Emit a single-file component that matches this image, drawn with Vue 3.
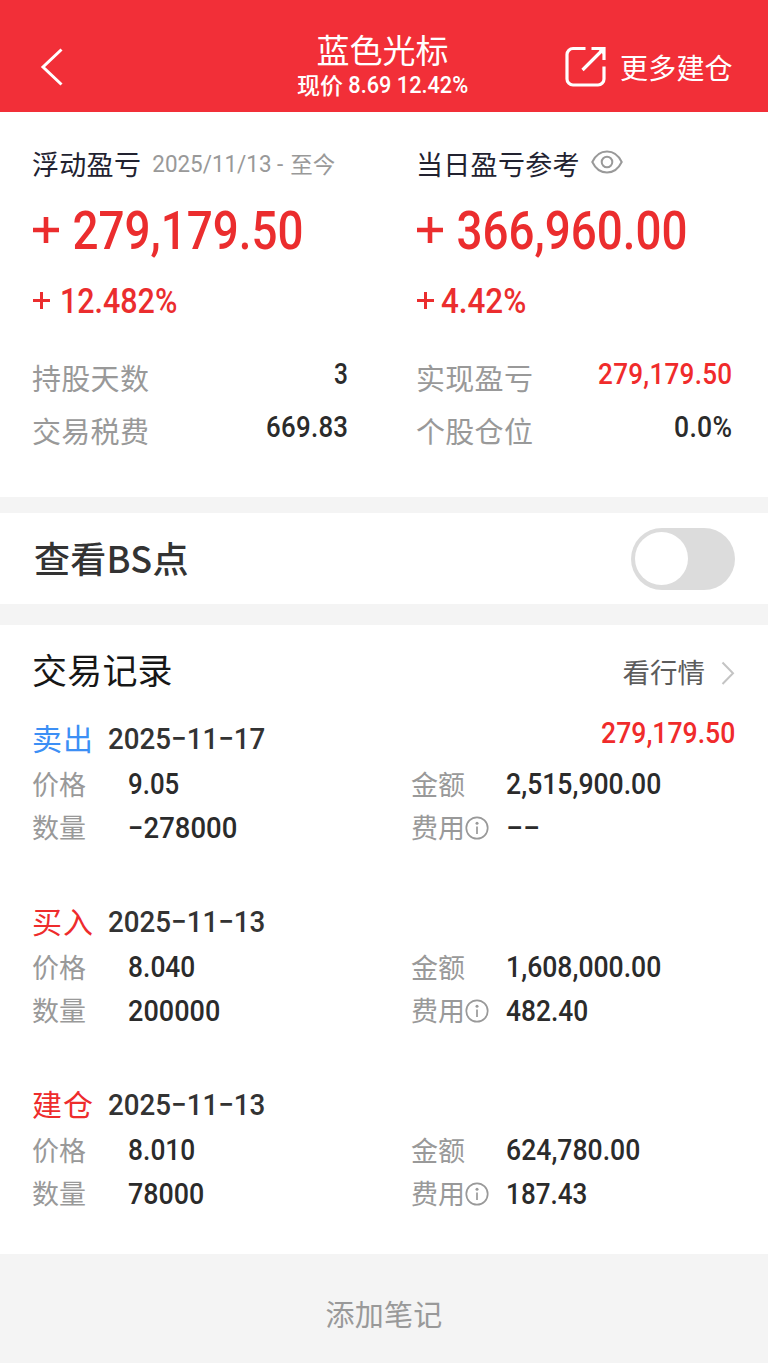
<script setup>
import { h } from 'vue'

// Condensed numeral: the box is w wide and cap tall, the baseline is its bottom edge.
const Num = ({ text, w, cap, weight = 500 }) => {
  const size = cap / 0.711
  const side = size * 0.03
  return h('svg', { width: w, height: cap, overflow: 'visible', style: 'display:block;flex:none' }, [
    h('text', {
      x: -side,
      y: cap,
      'font-family': 'Roboto, sans-serif',
      'font-size': size,
      'font-weight': weight,
      fill: 'currentColor',
      textLength: w + side * 1.3,
      lengthAdjust: 'spacingAndGlyphs'
    }, text)
  ])
}
Num.props = ['text', 'w', 'cap', 'weight']

const summary = [
  {
    label: '浮动盈亏', period: true, amount: '279,179.50', rate: '12.482%', rateW: 116, gap: 11,
    rows: [
      { label: '持股天数', value: '3', w: 13 },
      { label: '交易税费', value: '669.83', w: 81 }
    ]
  },
  {
    label: '当日盈亏参考', eye: true, amount: '366,960.00', rate: '4.42%', rateW: 84, gap: 8,
    rows: [
      { label: '实现盈亏', value: '279,179.50', w: 133, red: true },
      { label: '个股仓位', value: '0.0%', w: 57 }
    ]
  }
]

const trades = [
  { type: '卖出', sell: true, date: '2025−11−17', profit: '279,179.50', price: '9.05', priceW: 50, qty: '−278000', qtyW: 108, amount: '2,515,900.00', amountW: 154, fee: '−−', feeW: 33 },
  { type: '买入', date: '2025−11−13', price: '8.040', priceW: 66, qty: '200000', qtyW: 91, amount: '1,608,000.00', amountW: 154, fee: '482.40', feeW: 81 },
  { type: '建仓', date: '2025−11−13', price: '8.010', priceW: 66, qty: '78000', qtyW: 75, amount: '624,780.00', amountW: 133, fee: '187.43', feeW: 80 }
]
</script>

<template>
  <div class="page">
    <header class="header">
      <svg class="back" width="24" height="40" viewBox="0 0 24 40"><path d="M21.500 2.500 3 20 21.500 37.500" /></svg>
      <div class="heading">
        <div class="title">蓝色光标</div>
        <div class="quote"><span>现价</span><Num text="8.69 12.42%" :w="119" :cap="17" /></div>
      </div>
      <div class="more">
        <svg width="42" height="42" viewBox="0 0 42 42">
          <path d="M20.500 2.500H8a6 6 0 0 0-6 6V33a6 6 0 0 0 6 6h25a6 6 0 0 0 6-6V20.500M26.500 2.500H39V14M38.500 3 17.500 24" />
          <path class="tip" d="M32 2h7.500v8z" />
        </svg>
        <span>更多建仓</span>
      </div>
    </header>

    <section class="summary">
      <div v-for="col in summary" :key="col.label" class="col">
        <div class="caption">
          <span>{{ col.label }}</span>
          <div v-if="col.period" class="period"><Num text="2025/11/13 -" :w="130" :cap="16.500" weight="400" /><span>至今</span></div>
          <svg v-if="col.eye" class="eye" width="32" height="24" viewBox="0 0 32 24">
            <path d="M1.300 12C8-2 24-2 30.700 12 24 26 8 26 1.300 12Z" /><circle cx="16" cy="12" r="5.300" />
          </svg>
        </div>
        <div class="amount">
          <svg width="26" height="26" viewBox="0 0 26 26"><path d="M0 13h26M13 0v26" stroke-width="4.600" /></svg>
          <Num :text="col.amount" :w="229" :cap="38" />
        </div>
        <div class="rate" :style="{ gap: col.gap + 'px' }">
          <svg width="17" height="17" viewBox="0 0 17 17"><path d="M0 8.500h17M8.500 0v17" stroke-width="3" /></svg>
          <Num :text="col.rate" :w="col.rateW" :cap="25" />
        </div>
        <div v-for="row in col.rows" :key="row.label" class="stat">
          <span class="stat-label">{{ row.label }}</span>
          <div class="stat-value" :class="{ red: row.red }"><Num :text="row.value" :w="row.w" :cap="21" /></div>
        </div>
      </div>
    </section>

    <section class="switch-row">
      <span class="switch-label">查看BS点</span>
      <div class="toggle"><div class="knob"></div></div>
    </section>

    <section class="records">
      <div class="records-head">
        <span class="records-title">交易记录</span>
        <span class="market">看行情</span>
        <svg width="14" height="24" viewBox="0 0 14 24"><path d="M1.500 1.500 12 12.300 1.500 23" /></svg>
      </div>
      <article v-for="(t, i) in trades" :key="i" class="trade">
        <div class="trade-head">
          <span class="type" :class="{ sell: t.sell }">{{ t.type }}</span>
          <Num :text="t.date" :w="156" :cap="21.500" />
          <div v-if="t.profit" class="profit"><Num :text="t.profit" :w="133" :cap="21" /></div>
        </div>
        <div class="line">
          <span class="key">价格</span><div class="val"><Num :text="t.price" :w="t.priceW" :cap="21" /></div>
          <span class="key">金额</span><div class="val"><Num :text="t.amount" :w="t.amountW" :cap="21" /></div>
        </div>
        <div class="line">
          <span class="key">数量</span><div class="val"><Num :text="t.qty" :w="t.qtyW" :cap="21" /></div>
          <span class="key">费用<svg width="24" height="24" viewBox="0 0 24 24"><circle cx="12" cy="12" r="10.700" /><path d="M12 10.500v7.500" /><circle class="dot" cx="12" cy="7.300" r="1.500" /></svg></span>
          <div class="val"><Num :text="t.fee" :w="t.feeW" :cap="21" /></div>
        </div>
      </article>
    </section>

    <footer class="note">添加笔记</footer>
  </div>
</template>

<style>
body { margin: 0; background: #fff; }
</style>

<style scoped>
.page { width: 768px; height: 1363px; display: flex; flex-direction: column; overflow: hidden; background: #fff; font-family: "Noto Sans CJK SC", sans-serif; white-space: nowrap; }
.page svg { flex: none; display: block; fill: none; stroke: none; }
.header { height: 112px; flex: none; display: grid; grid-template-columns: 264px 237px 1fr; background: #f22f38; color: #fff; }
.back { margin: 47px 0 0 40px; }
.header .back path { stroke: #fff; stroke-width: 3; }
.heading { display: flex; flex-direction: column; align-items: center; padding-top: 29px; }
.title { font-size: 33px; line-height: 40px; }
.quote { display: flex; align-items: center; gap: 6px; height: 30px; font-size: 23px; line-height: 30px; font-weight: 500; }
.more { display: flex; align-items: center; gap: 13px; padding: 22px 0 0 64px; font-size: 28px; letter-spacing: .2px; }
.more path { stroke: #fff; stroke-width: 3.2; }
.more .tip { fill: #fff; stroke: none; }
.summary { height: 385px; flex: none; display: grid; grid-template-columns: 1fr 1fr; }
.col { padding: 33px 36px 0 32px; display: flex; flex-direction: column; }
.caption { height: 36px; display: flex; align-items: center; font-size: 27px; letter-spacing: .3px; color: #222230; }
.period { display: flex; align-items: center; gap: 7px; margin-left: 12px; color: #999; font-size: 22.500px; letter-spacing: 0; }
.eye { margin: 0 0 2px 11px; }
.eye path, .eye circle { stroke: #999; stroke-width: 2; }
.amount { display: flex; align-items: center; gap: 15px; margin: 30px 0 0 1px; color: #eb2d2e; }
.amount path, .rate path { stroke: currentColor; }
.rate { display: flex; align-items: center; margin: 39px 0 38px 1px; color: #eb2d2e; }
.stat { height: 53px; display: flex; align-items: center; justify-content: space-between; font-size: 29px; letter-spacing: .3px; color: #999; }
.stat-label { padding-bottom: 2px; }
.stat-value { padding-bottom: 8px; color: #2b2b2b; }
.stat-value.red { color: #f02b2b; }
.switch-row { height: 91px; flex: none; border: solid #f4f4f4; border-width: 16px 0 21px; display: flex; align-items: center; justify-content: space-between; padding: 0 33px 0 34px; font-size: 36px; font-weight: 500; color: #333; letter-spacing: .3px; }
.switch-label { padding-bottom: 3px; }
.toggle { width: 104px; height: 62px; border-radius: 31px; background: #dcdcdc; display: flex; align-items: center; padding-left: 4px; box-sizing: border-box; }
.knob { width: 53px; height: 53px; border-radius: 50%; background: #fff; }
.records { height: 629px; flex: none; }
.records-head { display: flex; align-items: center; height: 86px; padding: 0 33px 0 32px; color: #5c5c5c; }
.records-title { font-size: 35px; letter-spacing: .2px; color: #171717; }
.market { margin: 5px 16px 0 auto; font-size: 27.500px; }
.records-head svg { margin-top: 10px; }
.records-head path { stroke: #c4c4c4; stroke-width: 2; }
.trade { height: 183px; }
.trade-head { display: flex; align-items: center; height: 51px; padding: 0 33px 0 32px; color: #333; }
.trade-head > svg { margin-top: 2px; }
.type { width: 77px; font-size: 30px; line-height: 48px; letter-spacing: 1px; color: #ee2c2c; }
.type.sell { color: #3c8ff5; }
.profit { margin: -9px 0 0 auto; color: #f02b2b; }
.line { display: grid; grid-template-columns: 97px 282px 96px 1fr; align-items: center; height: 43.500px; padding-left: 32px; }
.key { display: flex; align-items: center; font-size: 27px; line-height: 40px; color: #999; }
.key svg { margin-top: 2px; }
.key circle, .key path { stroke: #999; stroke-width: 1.7; }
.key .dot { fill: #999; stroke: none; }
.val { color: #2b2b2b; }
.note { flex: 1; background: #f4f4f4; color: #999; font-size: 29px; letter-spacing: .2px; line-height: 119px; text-align: center; }
</style>
